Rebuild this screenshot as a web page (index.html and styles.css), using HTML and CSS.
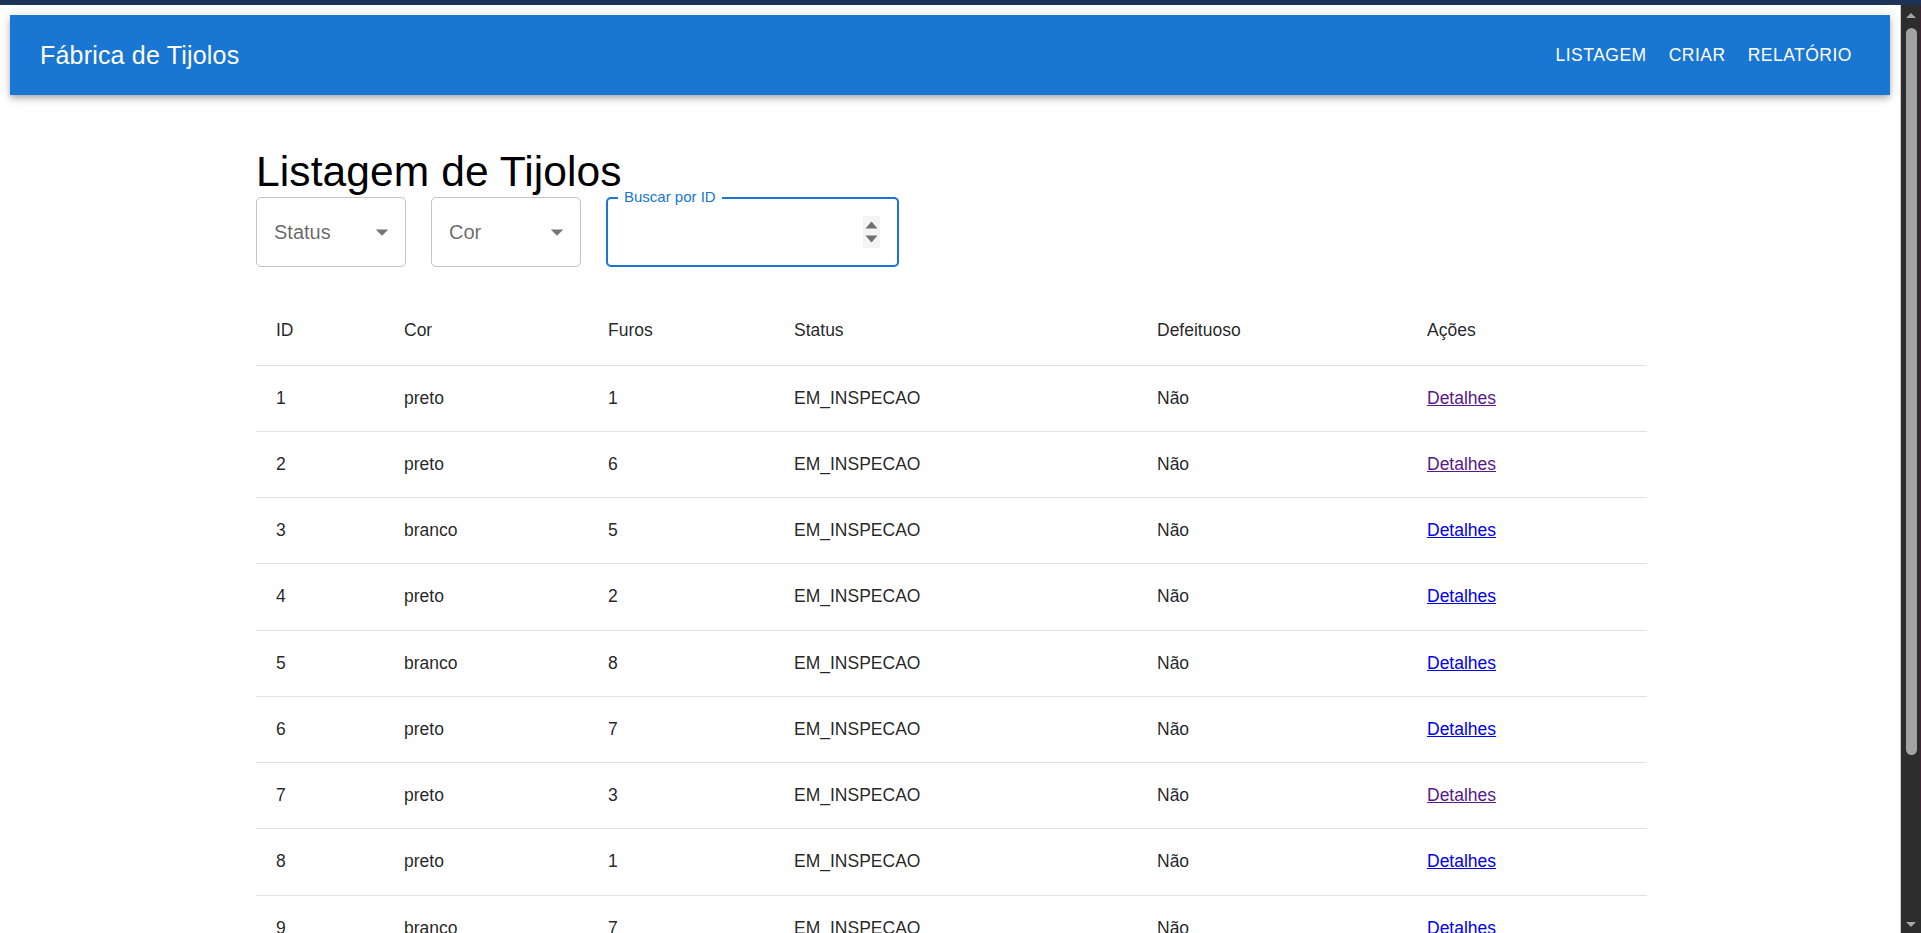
FILE: index.html
```html
<!DOCTYPE html>
<html lang="pt-BR">
<head>
<meta charset="utf-8">
<title>Fábrica de Tijolos</title>
<link rel="stylesheet" href="styles.css">
</head>
<body>
<div class="topband"></div>
<div class="frame">
  <div class="page">
    <header class="appbar">
      <div class="brand">Fábrica de Tijolos</div>
      <nav class="nav">
        <a class="navbtn">Listagem</a>
        <a class="navbtn">Criar</a>
        <a class="navbtn">Relatório</a>
      </nav>
    </header>
    <main class="container">
      <h1 class="title">Listagem de Tijolos</h1>
      <div class="filters">
        <div class="select">
          <span class="select-label">Status</span>
          <svg class="drop" viewBox="0 0 24 24"><path d="M7 10l5 5 5-5z"/></svg>
        </div>
        <div class="select">
          <span class="select-label">Cor</span>
          <svg class="drop" viewBox="0 0 24 24"><path d="M7 10l5 5 5-5z"/></svg>
        </div>
        <div class="numfield">
          <span class="float-label">Buscar por ID</span>
          <svg class="spin" viewBox="0 0 17 32"><rect width="17" height="32" fill="#f4f4f4"/><path d="M2.5 12.5 8.5 5.5 14.5 12.5z" fill="#707070"/><path d="M2.5 19.5 8.5 26.5 14.5 19.5z" fill="#707070"/></svg>
        </div>
      </div>
      <div class="grid">
        <div class="row head">
          <div class="cell">ID</div><div class="cell">Cor</div><div class="cell">Furos</div><div class="cell">Status</div><div class="cell">Defeituoso</div><div class="cell">Ações</div>
        </div>
        <div class="row"><div class="cell">1</div><div class="cell">preto</div><div class="cell">1</div><div class="cell">EM_INSPECAO</div><div class="cell">Não</div><div class="cell"><a class="link visited" href="#1">Detalhes</a></div></div>
        <div class="row"><div class="cell">2</div><div class="cell">preto</div><div class="cell">6</div><div class="cell">EM_INSPECAO</div><div class="cell">Não</div><div class="cell"><a class="link visited" href="#2">Detalhes</a></div></div>
        <div class="row"><div class="cell">3</div><div class="cell">branco</div><div class="cell">5</div><div class="cell">EM_INSPECAO</div><div class="cell">Não</div><div class="cell"><a class="link" href="#3">Detalhes</a></div></div>
        <div class="row"><div class="cell">4</div><div class="cell">preto</div><div class="cell">2</div><div class="cell">EM_INSPECAO</div><div class="cell">Não</div><div class="cell"><a class="link" href="#4">Detalhes</a></div></div>
        <div class="row"><div class="cell">5</div><div class="cell">branco</div><div class="cell">8</div><div class="cell">EM_INSPECAO</div><div class="cell">Não</div><div class="cell"><a class="link" href="#5">Detalhes</a></div></div>
        <div class="row"><div class="cell">6</div><div class="cell">preto</div><div class="cell">7</div><div class="cell">EM_INSPECAO</div><div class="cell">Não</div><div class="cell"><a class="link" href="#6">Detalhes</a></div></div>
        <div class="row"><div class="cell">7</div><div class="cell">preto</div><div class="cell">3</div><div class="cell">EM_INSPECAO</div><div class="cell">Não</div><div class="cell"><a class="link visited" href="#7">Detalhes</a></div></div>
        <div class="row"><div class="cell">8</div><div class="cell">preto</div><div class="cell">1</div><div class="cell">EM_INSPECAO</div><div class="cell">Não</div><div class="cell"><a class="link" href="#8">Detalhes</a></div></div>
        <div class="row"><div class="cell">9</div><div class="cell">branco</div><div class="cell">7</div><div class="cell">EM_INSPECAO</div><div class="cell">Não</div><div class="cell"><a class="link" href="#9">Detalhes</a></div></div>
        <div class="row"><div class="cell">10</div><div class="cell">preto</div><div class="cell">4</div><div class="cell">EM_INSPECAO</div><div class="cell">Não</div><div class="cell"><a class="link" href="#10">Detalhes</a></div></div>
      </div>
    </main>
  </div>
  <div class="scrollbar">
    <div class="sb-arrow up"></div>
    <div class="sb-thumb"></div>
    <div class="sb-track"></div>
    <div class="sb-arrow down"></div>
  </div>
</div>
</body>
</html>
```

FILE: styles.css
```css
html, body {
  margin: 0;
  padding: 0;
  height: 933px;
  overflow: hidden;
  background: #ffffff;
  font-family: "Liberation Sans", Arial, Helvetica, sans-serif;
}

.topband {
  height: 5px;
  background: #1c3459;
}

.frame {
  display: flex;
  height: 928px;
}

.page {
  flex: 1;
  min-width: 0;
  padding: 10px;
  overflow: hidden;
  background: #ffffff;
}

/* App bar */
.appbar {
  height: 80px;
  box-sizing: border-box;
  padding: 0 28px 0 30px;
  display: flex;
  align-items: center;
  justify-content: space-between;
  background: #1976d2;
  color: #ffffff;
  box-shadow: 0 2.5px 5px -1.25px rgba(0,0,0,0.2), 0 5px 6px 0 rgba(0,0,0,0.14), 0 1.25px 12.5px 0 rgba(0,0,0,0.12);
}

.brand {
  font-size: 25px;
  font-weight: 400;
  line-height: 1.6;
  letter-spacing: 0.19px;
}

.nav {
  display: flex;
  gap: 2px;
}

.navbtn {
  display: block;
  padding: 7.5px 10px;
  font-size: 17.5px;
  line-height: 1.75;
  letter-spacing: 0.5px;
  text-transform: uppercase;
  color: #ffffff;
  cursor: pointer;
}

/* Content */
.container {
  width: 1391px;
  margin-left: 246px;
}

.title {
  margin: 51px 0 0;
  height: 51px;
  font-size: 42.5px;
  line-height: 51px;
  font-weight: 400;
  color: #000000;
  letter-spacing: 0.1px;
}

.filters {
  display: flex;
  gap: 25px;
  height: 70px;
}

.select {
  width: 150px;
  height: 70px;
  box-sizing: border-box;
  border: 1.25px solid rgba(0,0,0,0.23);
  border-radius: 5px;
  display: flex;
  align-items: center;
  justify-content: space-between;
  padding: 0 8px 0 17px;
}

.select-label {
  font-size: 20px;
  color: rgba(0,0,0,0.6);
}

.drop {
  width: 30px;
  height: 30px;
  fill: rgba(0,0,0,0.54);
}

.numfield {
  position: relative;
  width: 293px;
  height: 70px;
  box-sizing: border-box;
  border: 2.5px solid #1976d2;
  border-radius: 5px;
  display: flex;
  align-items: center;
  justify-content: flex-end;
  padding: 0 17px;
}

.float-label {
  position: absolute;
  left: 10px;
  top: -11px;
  padding: 0 6px;
  background: #ffffff;
  font-size: 15px;
  line-height: 18px;
  color: #1976d2;
}

.spin {
  width: 17px;
  height: 32px;
}

/* Table */
.grid {
  margin-top: 28.5px;
  color: rgba(0,0,0,0.87);
  font-size: 17.5px;
}

.row {
  display: grid;
  grid-template-columns: 128px 204px 186px 363px 270px 240px;
  align-items: center;
  height: 66.25px;
  box-sizing: border-box;
  border-bottom: 1px solid #e0e0e0;
}

.row.head {
  height: 70px;
}

.cell {
  padding-left: 20px;
  line-height: 25px;
  white-space: nowrap;
}

.link {
  color: #0000ee;
  text-decoration: underline;
}

.link.visited {
  color: #551a8b;
}

/* Fake window scrollbar */
.scrollbar {
  position: relative;
  width: 21px;
  box-sizing: border-box;
  border-left: 1px solid #cdcdcd;
  background: #2d2d2d;
  display: flex;
  flex-direction: column;
  align-items: center;
}

.scrollbar::after {
  content: "";
  position: absolute;
  right: 0;
  top: 0;
  width: 1px;
  height: 808px;
  background: #4a1c34;
}

.sb-arrow {
  width: 0;
  height: 0;
  border-left: 5px solid transparent;
  border-right: 5px solid transparent;
}

.sb-arrow.up {
  margin-top: 8px;
  border-bottom: 5px solid #a6a6a6;
}

.sb-thumb {
  margin-top: 10px;
  width: 11px;
  height: 727px;
  border-radius: 6px;
  background: #a3a3a3;
}

.sb-track {
  flex: 1;
}

.sb-arrow.down {
  margin-bottom: 6px;
  border-top: 5px solid #a6a6a6;
}
```
